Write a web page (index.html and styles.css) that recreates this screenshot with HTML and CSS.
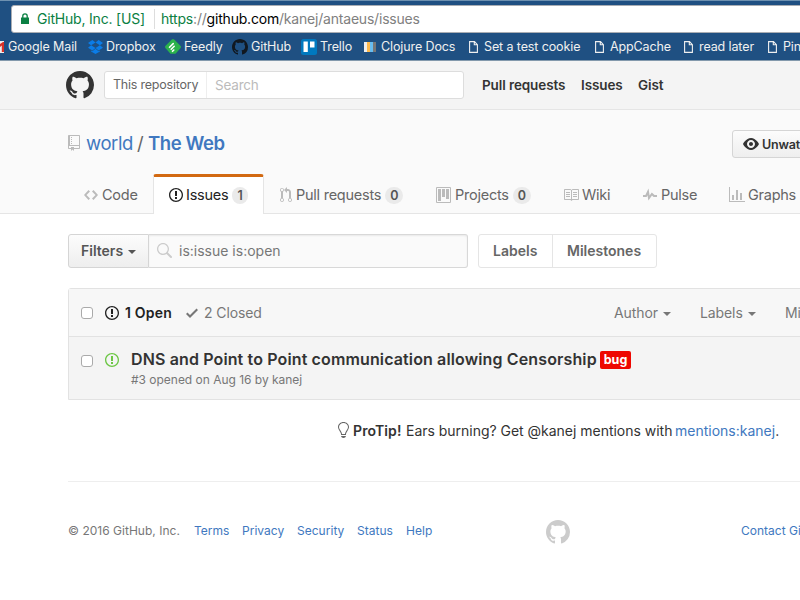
FILE: index.html
```html
<!DOCTYPE html>
<html lang="en">
<head>
<meta charset="utf-8">
<title>Issues</title>
<link rel="stylesheet" href="styles.css">
</head>
<body>
<svg class="sprite" aria-hidden="true">
  <symbol id="mark" viewBox="0 0 16 16"><path d="M8 0C3.58 0 0 3.58 0 8c0 3.54 2.29 6.53 5.47 7.59.4.07.55-.17.55-.38 0-.19-.01-.82-.01-1.49-2.01.37-2.53-.49-2.69-.94-.09-.23-.48-.94-.82-1.13-.28-.15-.68-.52-.01-.53.63-.01 1.08.58 1.23.82.72 1.21 1.87.87 2.33.66.07-.52.28-.87.51-1.07-1.78-.2-3.64-.89-3.64-3.95 0-.87.31-1.59.82-2.15-.08-.2-.36-1.02.08-2.12 0 0 .67-.21 2.2.82.64-.18 1.32-.27 2-.27.68 0 1.36.09 2 .27 1.53-1.04 2.2-.82 2.2-.82.44 1.1.16 1.92.08 2.12.51.56.82 1.27.82 2.15 0 3.07-1.87 3.75-3.65 3.95.29.25.54.73.54 1.48 0 1.07-.01 1.93-.01 2.2 0 .21.15.46.55.38A8.013 8.013 0 0 0 16 8c0-4.42-3.58-8-8-8z"/></symbol>
  <symbol id="issue" viewBox="0 0 14 16"><path d="M7 2.3c3.14 0 5.7 2.56 5.7 5.7s-2.56 5.7-5.7 5.7A5.71 5.71 0 0 1 1.3 8c0-3.14 2.56-5.7 5.7-5.7zM7 1C3.14 1 0 4.14 0 8s3.14 7 7 7 7-3.14 7-7-3.14-7-7-7zm1 3H6v5h2V4zm0 6H6v2h2v-2z"/></symbol>
  <symbol id="page" viewBox="0 0 9 12"><path d="M.6.6h4.9l2.9 3v7.8H.6zM5.3.6v3.2h3.1" fill="none" stroke="currentColor" stroke-width="1.1"/></symbol>
</svg>

<div class="browser">
  <div class="address">
    <svg class="lock" viewBox="0 0 8 11"><path d="M0 4.5h8V11H0z"/><path d="M1.8 5V3a2.2 2.2 0 0 1 4.4 0v2" fill="none" stroke="currentColor" stroke-width="1.3"/></svg>
    <span class="owner">GitHub, Inc. [US]</span>
    <span class="url"><span class="secure">https</span>://<span class="host">github.com</span>/kanej/antaeus/issues</span>
  </div>
  <div class="bookmarks">
    <span class="mark-item gmail"><svg class="fav-gmail" viewBox="0 0 4 12"><path fill="#eee" d="M0 0h4v12H0z"/><path fill="#d93025" d="M4 1v10H1.800V4.500L0 6V3l3-2z"/></svg><span>Google Mail</span></span>
    <span class="mark-item dropbox"><svg class="fav-dropbox" viewBox="0 0 15 14"><path fill="#0b7de8" d="M4.400 0 0 2.900l3.100 2.400L7.500 2.600zM0 7.800l4.400 2.800 3.100-2.500-4.400-2.800zM7.500 8.100l3.100 2.500L15 7.800l-3.100-2.500zM15 2.900 10.600 0 7.500 2.600l4.400 2.700zM7.500 8.800l-3.100 2.500-1.300-.8v.9L7.500 14l4.400-2.600v-.9l-1.300.8z"/></svg><span>Dropbox</span></span>
    <span class="mark-item feedly"><svg class="fav" viewBox="0 0 16 16"><path fill="#2bb24c" d="M6.800.6a1.700 1.700 0 0 1 2.400 0l6.200 6.200a1.700 1.700 0 0 1 0 2.400L10.500 14.800h-5L.6 9.200a1.700 1.700 0 0 1 0-2.400z"/><path d="m4.500 8.300 3.700-3.700M6.200 10.300l3-3M7.500 12.300l1.300-1.300" stroke="#fff" stroke-width="1.600" stroke-linecap="round"/></svg><span>Feedly</span></span>
    <span class="mark-item github"><svg class="fav dark"><use href="#mark"/></svg><span>GitHub</span></span>
    <span class="mark-item trello"><svg class="fav" viewBox="0 0 16 16"><rect width="16" height="16" rx="2.500" fill="#0079bf"/><path fill="#fff" d="M2.500 2.500h4.300V13H2.500zM9 2.500h4.500v6H9z"/></svg><span>Trello</span></span>
    <span class="mark-item clojure"><i class="stripes"></i><span>Clojure Docs</span></span>
    <span class="mark-item cookie"><svg class="doc"><use href="#page"/></svg><span>Set a test cookie</span></span>
    <span class="mark-item cache"><svg class="doc"><use href="#page"/></svg><span>AppCache</span></span>
    <span class="mark-item later"><svg class="doc"><use href="#page"/></svg><span>read later</span></span>
    <span class="mark-item pin"><svg class="doc"><use href="#page"/></svg><span>Pinboard</span></span>
  </div>
</div>

<header class="site-header">
  <svg class="logo"><use href="#mark"/></svg>
  <div class="site-search"><span class="scope">This repository</span><span class="placeholder">Search</span></div>
  <nav class="site-nav"><a class="n-pulls">Pull requests</a><a class="n-issues">Issues</a><a class="n-gist">Gist</a></nav>
</header>

<section class="pagehead">
  <div class="repo-row">
    <h1 class="repo-title">
      <svg class="repo-icon" viewBox="0 0 12 16"><path d="M4 9H3V8h1v1zm0-3H3v1h1V6zm0-2H3v1h1V4zm0-2H3v1h1V2zm8-1v12c0 .55-.45 1-1 1H6v2l-1.500-1.500L3 16v-2H1c-.55 0-1-.45-1-1V1c0-.55.45-1 1-1h10c.55 0 1 .45 1 1zm-1 10H1v2h2v-1h3v1h5v-2zm0-10H2v9h9V1z"/></svg>
      <a class="r-owner">world</a><span class="slash">/</span><a class="r-name">The Web</a>
    </h1>
    <div class="watch"><svg viewBox="0 0 16 16"><path d="M8.060 2C3 2 0 8 0 8s3 6 8.060 6C13 14 16 8 16 8s-3-6-7.940-6zM8 12c-2.200 0-4-1.780-4-4 0-2.200 1.800-4 4-4 2.220 0 4 1.800 4 4 0 2.220-1.780 4-4 4zm2-4c0 1.110-.89 2-2 2-1.110 0-2-.89-2-2 0-1.110.89-2 2-2 1.110 0 2 .89 2 2z"/></svg><span>Unwatch</span></div>
  </div>
  <nav class="tabs">
    <a class="tab t-code"><svg viewBox="0 0 14 16"><path d="M9.500 3L8 4.500 11.500 8 8 11.500 9.500 13 14 8 9.500 3zm-5 0L0 8l4.500 5L6 11.500 2.500 8 6 4.500 4.500 3z"/></svg><span>Code</span></a>
    <a class="tab t-issues selected"><svg><use href="#issue"/></svg><span>Issues</span><b class="counter">1</b></a>
    <a class="tab t-pulls"><svg viewBox="0 0 12 16"><path d="M11 11.280V5c-.03-.78-.34-1.470-.94-2.060C9.460 2.350 8.780 2.030 8 2H7V0L4 3l3 3V4h1c.27.02.48.11.69.31.21.2.3.42.31.69v6.280A1.993 1.993 0 0 0 10 15a1.993 1.993 0 0 0 1-3.720zm-1 2.920c-.66 0-1.200-.55-1.200-1.200 0-.65.55-1.200 1.200-1.200.65 0 1.200.55 1.200 1.200 0 .65-.55 1.200-1.200 1.200zM4 3c0-1.110-.89-2-2-2a1.993 1.993 0 0 0-1 3.720v6.560A1.993 1.993 0 0 0 2 15a1.993 1.993 0 0 0 1-3.720V4.720c.59-.34 1-.98 1-1.720zm-.8 10c0 .66-.55 1.200-1.200 1.200-.65 0-1.200-.55-1.200-1.200 0-.65.55-1.200 1.200-1.200.65 0 1.200.55 1.200 1.200zM2 4.200C1.340 4.200.8 3.650.8 3c0-.65.55-1.200 1.200-1.200.65 0 1.200.55 1.200 1.200 0 .65-.55 1.200-1.200 1.200z"/></svg><span>Pull requests</span><b class="counter">0</b></a>
    <a class="tab t-projects"><svg viewBox="0 0 15 16"><path fill-rule="evenodd" d="M10 12h3V2h-3v10zm-4-2h3V2H6v8zm-4 4h3V2H2v12zm-1 1h13V1H1v14zM14 0H1a1 1 0 0 0-1 1v14a1 1 0 0 0 1 1h13a1 1 0 0 0 1-1V1a1 1 0 0 0-1-1z"/></svg><span>Projects</span><b class="counter">0</b></a>
    <a class="tab t-wiki"><svg viewBox="0 0 16 16"><path d="M3 5h4v1H3V5zm0 3h4V7H3v1zm0 2h4V9H3v1zm11-5h-4v1h4V5zm0 2h-4v1h4V7zm0 2h-4v1h4V9zm2-6v9c0 .55-.45 1-1 1H9.500l-1 1-1-1H2c-.55 0-1-.45-1-1V3c0-.55.45-1 1-1h5.500l1 1 1-1H15c.55 0 1 .45 1 1zm-8 .5L7.500 3H2v9h6V3.500zm7-.5H9.500l-.5.5V12h6V3z"/></svg><span>Wiki</span></a>
    <a class="tab t-pulse"><svg viewBox="0 0 14 16"><path d="M11.500 8L8.800 5.400 6.600 8.500 5.500 1.600 2.380 8H0v2h3.600l.9-1.800.9 5.400L9 8.500l1.600 1.500H14V8h-2.500z"/></svg><span>Pulse</span></a>
    <a class="tab t-graphs"><svg viewBox="0 0 16 16"><path d="M16 14v1H0V0h1v14h15zM5 13H3V8h2v5zm4 0H7V3h2v10zm4 0h-2V6h2v7z"/></svg><span>Graphs</span></a>
  </nav>
</section>

<main class="content">
  <div class="subnav">
    <div class="filters">Filters<i class="caret"></i></div>
    <div class="query"><svg viewBox="0 0 16 16"><path d="M15.700 13.300l-3.810-3.830A5.930 5.930 0 0 0 13 6c0-3.310-2.690-6-6-6S1 2.690 1 6s2.690 6 6 6c1.300 0 2.480-.41 3.470-1.110l3.830 3.810c.19.2.45.3.7.3.25 0 .52-.09.7-.3a.996.996 0 0 0 0-1.410v.01zM7 10.700c-2.590 0-4.700-2.110-4.700-4.700 0-2.590 2.110-4.700 4.700-4.700 2.590 0 4.700 2.110 4.700 4.700 0 2.590-2.110 4.700-4.700 4.700z"/></svg><span>is:issue is:open</span></div>
    <div class="links"><a class="l-labels">Labels</a><a class="l-miles">Milestones</a></div>
  </div>

  <div class="listing">
    <div class="list-head">
      <i class="box"></i>
      <svg class="issue-icon"><use href="#issue"/></svg>
      <b class="open">1 Open</b>
      <svg class="check" viewBox="0 0 12 16"><path d="M12 5l-8 8-4-4 1.500-1.500L4 10l6.500-6.500L12 5z"/></svg>
      <span class="closed">2 Closed</span>
      <div class="sorts"><span class="s-author">Author<i class="caret"></i></span><span class="s-labels">Labels<i class="caret"></i></span><span class="s-miles">Milestones</span></div>
    </div>
    <div class="issue">
      <i class="box"></i>
      <svg class="issue-icon green"><use href="#issue"/></svg>
      <div class="issue-text">
        <div class="issue-line"><a class="issue-title">DNS and Point to Point communication allowing Censorship</a><span class="bug">bug</span></div>
        <div class="meta">#3 opened on Aug 16 by kanej</div>
      </div>
    </div>
  </div>

  <p class="protip"><svg viewBox="0 0 13 16"><path d="M6.500 0C3.480 0 1 2.190 1 5c0 .92.55 2.250 1 3 1.340 2.250 1.780 2.780 2 4v1h5v-1c.22-1.220.66-1.750 2-4 .45-.75 1-2.080 1-3 0-2.810-2.480-5-5.500-5zm3.640 7.480c-.25.44-.47.8-.67 1.110-.86 1.410-1.250 2.060-1.450 3.230-.02.05-.02.11-.02.17H5c0-.06 0-.13-.02-.17-.2-1.170-.59-1.830-1.450-3.230-.2-.31-.42-.67-.67-1.110C2.440 6.780 2 5.650 2 5c0-2.200 2.020-4 4.500-4 1.220 0 2.360.42 3.220 1.190C10.550 2.940 11 3.940 11 5c0 .66-.44 1.780-.86 2.480zM4 14h5c-.23 1.140-1.300 2-2.500 2s-2.270-.86-2.500-2z"/></svg><b>ProTip!</b><span class="tip">Ears burning? Get @kanej mentions with</span><span class="mention"><a>mentions:kanej</a>.</span></p>

  <footer class="footer">
    <span class="f-copy">© 2016 GitHub, Inc.</span><a class="f-terms">Terms</a><a class="f-privacy">Privacy</a><a class="f-security">Security</a><a class="f-status">Status</a><a class="f-help">Help</a><svg class="f-mark"><use href="#mark"/></svg><a class="f-contact">Contact GitHub</a>
  </footer>
</main>
</body>
</html>
```
FILE: styles.css
```css
* { box-sizing: border-box; }
body { margin: 0; width: 800px; height: 600px; overflow: hidden; background: #fff; color: #333; font-family: Inter, "Liberation Sans", sans-serif; font-size: 14px; white-space: nowrap; }
.sprite { display: none; }
svg { display: block; flex: none; fill: currentColor; }
a { text-decoration: none; }

/* Browser toolbar */
.browser { height: 61px; padding: 4px 0 0 11px; background: #1f5082; border-top: 1px solid #6e91b0; border-bottom: 1px solid #8399ac; overflow: hidden; }
.address { display: flex; align-items: center; width: 830px; height: 28px; background: #fff; border: 1px solid #a9adb3; border-radius: 3px; font-size: 14px; letter-spacing: -.2px; }
.lock { width: 8px; height: 11px; margin: 0 8px 2px 9px; color: #0b8043; }
.owner { width: 118px; height: 20px; line-height: 20px; color: #0b8043; border-right: 1px solid #ddd; }
.url { margin-left: 6px; height: 20px; line-height: 20px; color: #808080; }
.secure { color: #0b8043; }
.host { color: #000; }
.bookmarks { display: flex; align-items: center; height: 27px; margin-left: -11px; color: #f0f0f0; font-size: 12.500px; letter-spacing: -.11px; }
.mark-item { display: flex; align-items: center; flex: none; }
.mark-item > :first-child { margin-right: 3px; flex: none; }
.fav { width: 16px; height: 16px; }
.fav-gmail { width: 4px; height: 12px; }
.fav-dropbox { width: 15px; height: 14px; }
.dark { color: #111820; }
.stripes { width: 12px; height: 10px; background: linear-gradient(90deg, #eee 3px, #fdb94d 3px 6px, #68bdf0 6px 9px, #777 9px); }
.doc { width: 9px; height: 12px; }
.gmail { width: 88px; }
.mark-item.gmail > :first-child { margin-right: 4px; }
.dropbox { width: 77px; }
.feedly { width: 67px; }
.github { width: 69px; }
.trello { width: 63px; }
.clojure { width: 105px; }
.mark-item.clojure > :first-child { margin-right: 5px; }
.mark-item > .doc:first-child { margin-right: 6px; }
.cookie { width: 126px; }
.cache { width: 89px; }
.later { width: 84px; }

/* Site header */
.site-header { display: flex; align-items: center; height: 49px; padding-left: 66px; background: #f4f4f4; border-bottom: 1px solid #e5e5e5; }
.logo { width: 28px; height: 28px; color: #333; margin-right: 10px; }
.site-search { display: flex; align-items: center; width: 360px; height: 28px; background: #fff; border: 1px solid #ddd; border-radius: 3px; }
.scope { width: 102px; height: 26px; padding-left: 8px; line-height: 26px; font-size: 12.500px; letter-spacing: -.22px; color: #666; border-right: 1px solid #eee; }
.placeholder { padding-left: 8px; font-size: 13.500px; letter-spacing: -.2px; color: #bbb; }
.site-nav { display: flex; margin-left: 18px; font-size: 13.500px; font-weight: 600; letter-spacing: -.1px; }
.n-pulls { width: 99px; }
.n-issues { width: 57px; }

/* Repository heading and tabs */
.pagehead { height: 104px; background: #fafafa; border-bottom: 1px solid #e5e5e5; }
.repo-row { display: flex; justify-content: space-between; height: 64px; padding: 20px 0 0 68px; }
.repo-title { display: flex; align-items: center; height: 26px; margin: 0; font-size: 18.500px; font-weight: 400; letter-spacing: -.4px; color: #666; }
.repo-icon { width: 12px; height: 16px; margin-right: 6px; color: #bbb; }
.r-owner, .r-name { color: #4078c0; }
.r-owner { width: 51px; }
.slash { width: 11px; }
.r-name { font-weight: 600; }
.watch { display: flex; align-items: center; flex: none; width: 100px; height: 28px; margin-right: -32px; padding-left: 10px; font-size: 12.500px; font-weight: 600; letter-spacing: -.2px; background: linear-gradient(#fcfcfc, #eee); border: 1px solid #d5d5d5; border-radius: 3px; }
.watch svg { width: 16px; height: 16px; margin-right: 3px; }
.tabs { display: flex; height: 40px; padding-left: 68px; font-size: 14.500px; letter-spacing: -.25px; color: #666; }
.tab { display: flex; align-items: center; flex: none; height: 40px; padding: 2px 0 0 16px; }
.tab svg { width: 14px; height: 16px; margin-right: 4px; color: #bbb; }
.tab span { margin-top: -2px; }
.selected { color: #222; background: #fff; border: 1px solid #e5e5e5; border-top: 3px solid #d26911; border-bottom: 0; border-radius: 3px 3px 0 0; }
.tab.selected svg { color: #222; margin-right: 3px; }
.tab.selected { padding: 0 0 1px 15px; }
.t-code { width: 85px; }
.tab.t-issues { width: 111px; }
.t-pulls { width: 156px; }
.t-projects { width: 128px; }
.t-wiki { width: 79px; }
.t-pulse { width: 86px; }
.tab.t-pulls svg { width: 12px; }
.tab.t-projects svg { width: 15px; }
.tab.t-wiki svg { width: 16px; margin-right: 3px; margin-left: -1px; }
.tab.t-graphs svg { width: 16px; margin-right: 3px; }
.counter { min-width: 16px; height: 17px; margin-left: 4px; padding: 0 5px; line-height: 17px; font-size: 12.500px; font-weight: 600; color: #555; background: #eaeaea; border-radius: 10px; }

/* Filters */
.content { padding-left: 68px; }
.subnav { display: flex; height: 34px; margin-top: 20px; font-size: 14px; }
.filters { display: flex; align-items: center; width: 81px; padding: 0 0 1px 12px; font-weight: 600; letter-spacing: 0; color: #555; background: linear-gradient(#fcfcfc, #eee); border: 1px solid #d5d5d5; border-radius: 3px 0 0 3px; }
.caret { flex: none; display: inline-block; border: 4px solid transparent; border-top-color: currentColor; border-bottom: 0; margin-left: 5px; vertical-align: middle; }
.filters .caret { margin-top: 2px; }
.query { display: flex; align-items: center; width: 319px; padding: 0 0 1px 7px; color: #777; background: #fafafa; border: 1px solid #d8d8d8; border-left: 0; border-radius: 0 3px 3px 0; box-shadow: inset 0 1px 2px rgba(0,0,0,.07); }
.query svg { width: 16px; height: 16px; margin-right: 7px; color: #ccc; }
.links { display: flex; width: 179px; margin-left: 10px; border: 1px solid #e5e5e5; border-radius: 3px; line-height: 32px; font-weight: 600; color: #666; }
.l-labels { width: 74px; padding-left: 14px; border-right: 1px solid #e5e5e5; }
.l-miles { padding-left: 14px; }

/* Issue list */
.listing { width: 840px; height: 112px; margin-top: 20px; border: 1px solid #e2e2e2; border-radius: 3px 0 0 0; background: #f4f4f4; }
.list-head { display: flex; align-items: center; height: 48px; padding-left: 12px; background: #f7f7f7; border-bottom: 1px solid #e2e2e2; color: #777; font-size: 14px; letter-spacing: -.1px; }
.box { flex: none; width: 12px; height: 12px; border: 1px solid #aaa; border-radius: 3px; background: #fff; }
.issue-icon { width: 14px; height: 16px; margin-left: 12px; color: #222; }
.open { width: 61px; margin-left: 6px; font-weight: 600; letter-spacing: .2px; color: #222; }
.check { width: 12px; height: 16px; margin: 0 6px 0 0; }
.closed { width: 410px; }
.sorts { display: flex; }
.s-author { width: 86px; }
.s-labels { width: 85px; }
.issue { display: flex; padding: 11px 0 0 12px; }
.issue .box { margin-top: 7px; }
.issue .issue-icon { margin-top: 4px; }
.issue .green { color: #6cc644; }
.issue-text { margin-left: 12px; }
.issue-line { display: flex; align-items: center; height: 22px; }
.issue-title { width: 469px; font-size: 16px; font-weight: 600; letter-spacing: .13px; }
.bug { width: 31px; height: 18px; margin-top: 1px; line-height: 18px; text-align: center; font-size: 12.500px; font-weight: 700; color: #fff; background: #ee0701; border-radius: 2px; }
.meta { margin-top: 2px; font-size: 12px; line-height: 16px; letter-spacing: -.02px; color: #777; }

/* Tip and footer */
.protip { display: flex; align-items: center; height: 18px; margin: 21px 0 0 269px; font-size: 14px; }
.protip svg { width: 13px; height: 16px; margin-right: 3px; color: #666; }
.protip b { flex: none; width: 53px; font-weight: 600; letter-spacing: .1px; }
.tip { flex: none; width: 269px; letter-spacing: -.02px; }
.protip a, .footer a { color: #4078c0; }
.footer { display: flex; align-items: center; height: 100px; margin-top: 42px; padding-bottom: 2px; border-top: 1px solid #eee; font-size: 12px; letter-spacing: .02px; color: #777; }
.footer > * { flex: none; }
.f-copy { width: 126px; }
.f-terms { width: 48px; }
.f-privacy { width: 55px; }
.f-security { width: 60px; }
.f-status { width: 49px; }
.f-help { width: 140px; }
.f-mark { width: 24px; height: 24px; color: #ccc; margin: 2px 171px 0 0; }
```
